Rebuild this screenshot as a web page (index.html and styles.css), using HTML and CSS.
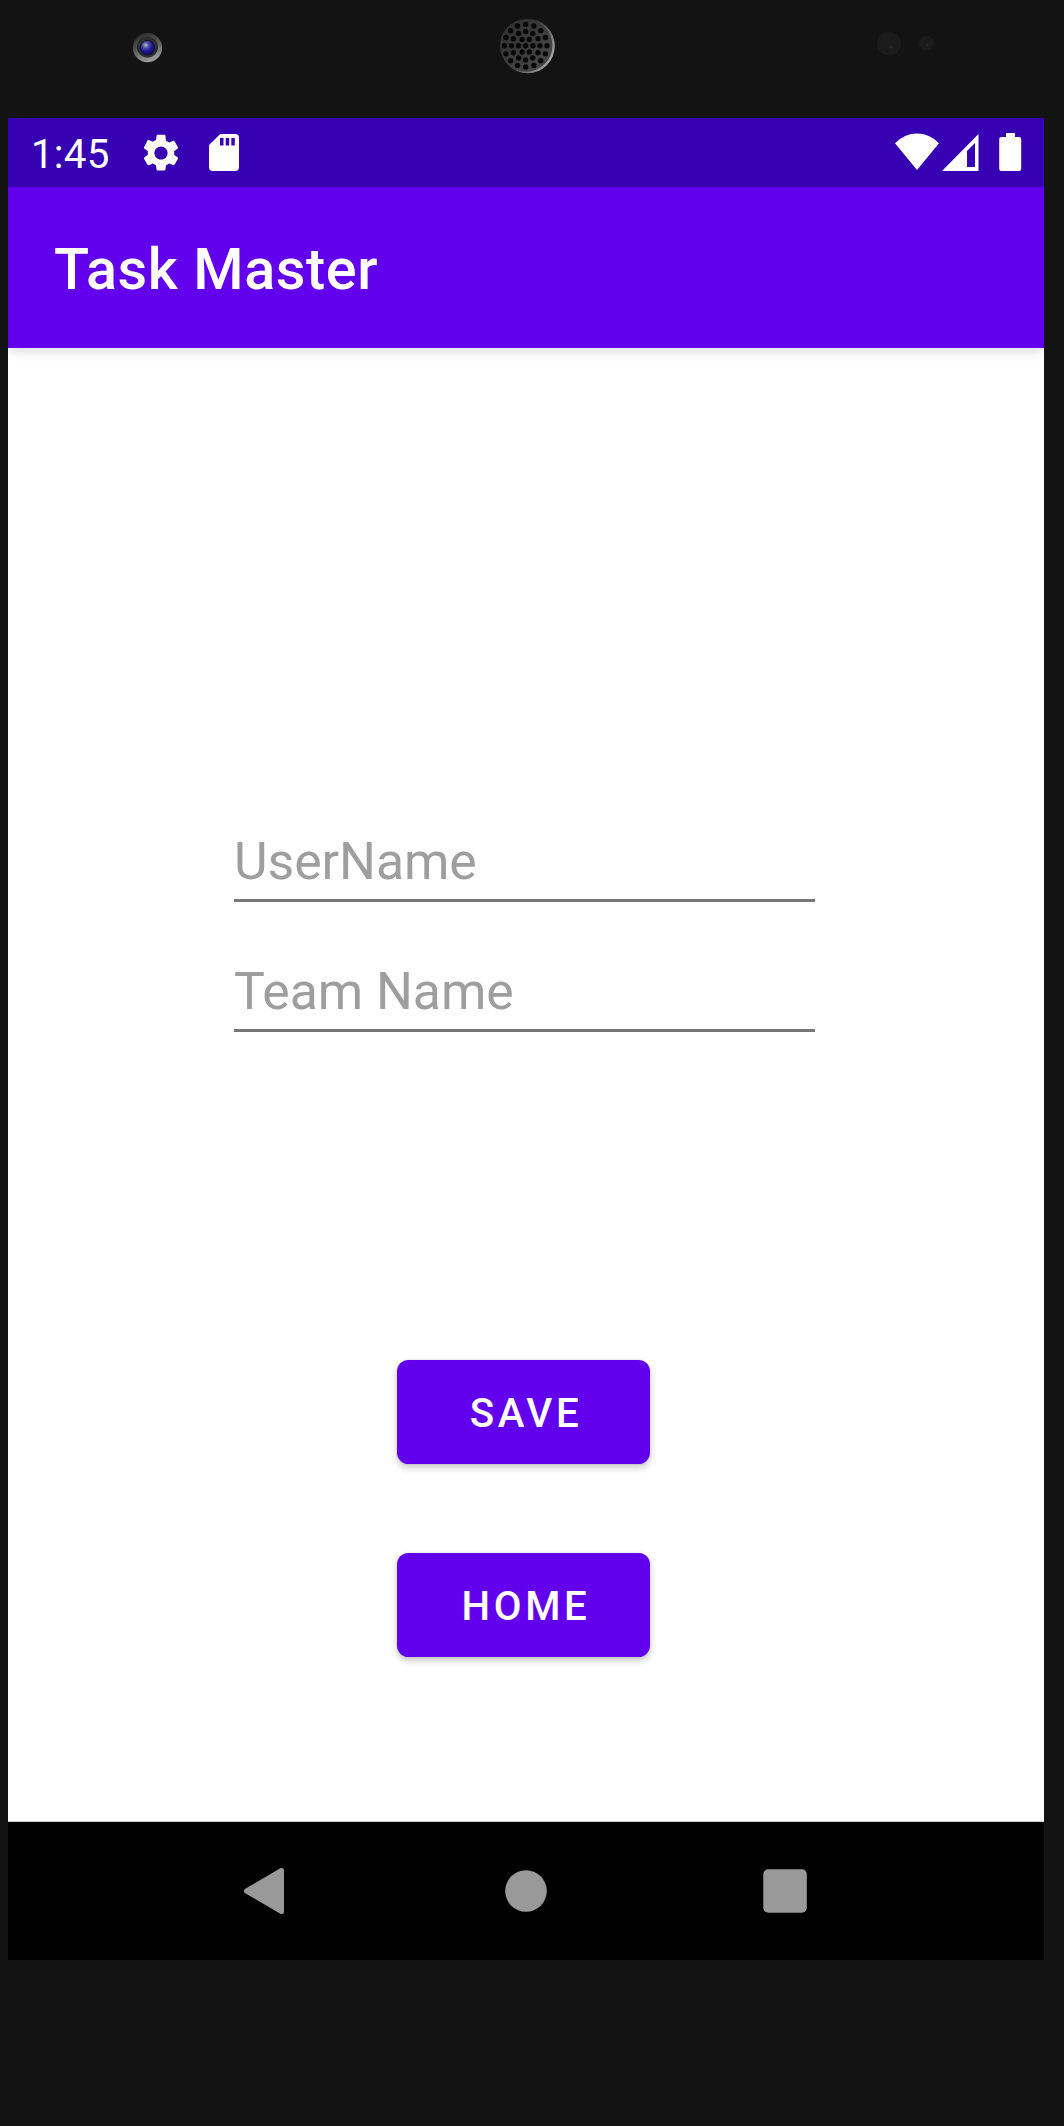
FILE: index.html
```html
<!DOCTYPE html>
<html lang="en">
<head>
<meta charset="utf-8">
<title>Task Master</title>
<link rel="stylesheet" href="styles.css">
</head>
<body>
<div class="device">
  <div class="bezel">
    <svg width="1064" height="118" viewBox="0 0 1064 118" aria-hidden="true">
      <defs>
        <linearGradient id="rim" x1="0" y1="0" x2=".4" y2="1"><stop offset="0" stop-color="#252525"/><stop offset=".5" stop-color="#505050"/><stop offset="1" stop-color="#999"/></linearGradient>
        <radialGradient id="lens" cx=".38" cy=".32" r=".7"><stop offset="0" stop-color="#b4bcd0"/><stop offset=".3" stop-color="#50509a"/><stop offset=".65" stop-color="#1c149c"/><stop offset="1" stop-color="#100a50"/></radialGradient>
        <linearGradient id="grille" x1="0" y1="0" x2="1" y2="1"><stop offset="0" stop-color="#2c2c2c"/><stop offset="1" stop-color="#4c4c4c"/></linearGradient>
        <linearGradient id="edge" x1="0" y1="0" x2="1" y2=".6"><stop offset=".4" stop-color="#222"/><stop offset="1" stop-color="#a0a0a0"/></linearGradient>
      </defs>
      <circle cx="147.5" cy="47.7" r="14.6" fill="url(#rim)"/>
      <circle cx="147.5" cy="47.2" r="10" fill="#303030" stroke="#262626"/>
      <circle cx="147.5" cy="47.7" r="7.3" fill="url(#lens)" stroke="#141420"/>
      <circle cx="527.5" cy="46" r="27.3" fill="url(#edge)"/>
      <circle cx="526.2" cy="45.5" r="26.3" fill="url(#grille)"/>
      <g fill="none" stroke="#080808" stroke-width="5.4" stroke-linecap="round" stroke-dasharray="0 1">
        <circle cx="525.7" cy="45.7" r="2.7" fill="#080808" stroke="none"/>
        <circle cx="525.7" cy="45.7" r="7.2" pathLength="6"/>
        <circle cx="525.7" cy="45.7" r="14.2" pathLength="12"/>
        <circle cx="525.7" cy="45.7" r="21.3" pathLength="16"/>
      </g>
      <circle cx="889" cy="43.500" r="12" fill="#1b1b1b"/><circle cx="891.3" cy="47" r="1.6" fill="#2e2422"/>
      <circle cx="926.5" cy="43" r="7.5" fill="#1c1b1b"/><circle cx="927" cy="45" r="1.5" fill="#2c2222"/>
    </svg>
  </div>
  <main class="screen">
    <header class="status-bar">
      <div class="status-left">
        <span class="clock">1:45</span>
        <svg class="gear" width="44" height="44" viewBox="0 0 24 24" fill="#fff"><path d="M19.14 12.94c.04-.3.06-.61.06-.94 0-.32-.02-.64-.07-.94l2.03-1.58c.18-.14.23-.41.12-.61l-1.92-3.32c-.12-.22-.37-.29-.59-.22l-2.39.96c-.5-.38-1.03-.7-1.62-.94L14.400 2.410c-.04-.24-.24-.41-.48-.41h-3.84c-.24 0-.43.17-.47.41l-.36 2.540c-.59.24-1.13.57-1.62.94l-2.39-.96c-.22-.08-.47 0-.59.22L2.740 8.870c-.12.21-.08.47.12.61l2.030 1.580c-.05.3-.09.63-.09.94s.02.64.07.94l-2.030 1.580c-.18.14-.23.41-.12.61l1.920 3.320c.12.22.37.29.59.22l2.390-.96c.5.38 1.030.7 1.620.94l.36 2.540c.05.24.24.41.48.41h3.840c.24 0 .44-.17.47-.41l.36-2.540c.59-.24 1.130-.56 1.620-.94l2.390.96c.22.08.47 0 .59-.22l1.920-3.320c.12-.22.07-.47-.12-.61l-2.010-1.580zM12 15.600c-1.980 0-3.600-1.620-3.600-3.600s1.620-3.600 3.600-3.600 3.600 1.620 3.600 3.600-1.620 3.600-3.600 3.600z"/></svg>
        <svg class="sd" width="30" height="37" viewBox="0 0 30 37"><path fill="#fff" d="M11.3 0H26.3Q30 0 30 3.7V33.3Q30 37 26.3 37H3.7Q0 37 0 33.3V11z"/><path fill="#3700b3" d="M11 4h3.5v7.5H11zM16.7 4h3.5v7.5h-3.5zM22.3 4h3.5v7.5h-3.5z"/></svg>
      </div>
      <svg class="status-right" width="128" height="38" viewBox="0 0 128 38" fill="#fff">
        <path d="M0 10.2Q9.5.5 22 .5T44 10.2L22 37z"/>
        <path fill-rule="evenodd" d="M47 38L83.5 1v37zM72 34h8V10l-8 8z"/>
        <path d="M111 0h9v4h4q2.2 0 2.2 2.2v29.6q0 2.2-2.2 2.2h-17.6q-2.2 0-2.2-2.2V6.2q0-2.2 2.2-2.2H111z"/>
      </svg>
    </header>
    <div class="app-bar"><h1>Task Master</h1></div>
    <form class="content">
      <input class="field" type="text" placeholder="UserName">
      <input class="field" type="text" placeholder="Team Name">
      <button class="button save" type="button">SAVE</button>
      <button class="button" type="button">HOME</button>
    </form>
    <nav class="nav-bar">
      <svg width="600" height="138" viewBox="0 0 600 138" fill="#999">
        <path stroke="#999" stroke-width="5" stroke-linejoin="round" d="M38.5 69L73.5 48.500V89.500z"/>
        <circle cx="318" cy="69" r="20.8"/>
        <rect x="555.3" y="47.2" width="43.5" height="43.5" rx="5"/>
      </svg>
    </nav>
  </main>
</div>
</body>
</html>
```
FILE: styles.css
```css
* { box-sizing: border-box; }

body {
  margin: 0;
  background: #131313;
  font-family: Roboto, sans-serif;
}

.device {
  width: 1064px;
  height: 2126px;
  overflow: hidden;
}

.bezel, .bezel svg { display: block; height: 118px; }

.screen {
  display: flex;
  flex-direction: column;
  width: 1036px;
  height: 1842px;
  margin-left: 8px;
  background: #fff;
}

.status-bar {
  display: flex;
  justify-content: space-between;
  align-items: center;
  height: 69px;
  padding: 0 21px 0 23px;
  background: #3700b3;
}

.status-left { display: flex; align-items: center; }

.clock {
  width: 85px;
  padding-top: 5px;
  color: #fff;
  font-size: 40.3px;
  line-height: 48px;
  letter-spacing: .2px;
}

.gear { margin-left: 22.5px; }
.sd { margin-left: 26.5px; }
.status-right { margin-bottom: 1px; }

.app-bar {
  display: flex;
  align-items: center;
  height: 161px;
  flex: none;
  padding: 4px 46px 0;
  background: #6200ee;
  box-shadow: 0 2px 12px rgba(0, 0, 0, .17);
  clip-path: inset(0 0 -20px 0);
}

h1 {
  margin: 0;
  color: #fff;
  font-size: 57.55px;
  font-weight: 500;
  letter-spacing: .6px;
}

.content {
  display: flex;
  flex-direction: column;
  align-items: center;
  height: 1474px;
  padding: 472px 0 0;
  border-bottom: 1px solid #ccc;
}

.field {
  width: 581px;
  height: 82px;
  margin: 0 3px 48px 0;
  padding: 4px 0 0;
  border: 0;
  border-bottom: 3px solid #777;
  outline: 0;
  background: none;
  font-family: inherit;
  font-size: 51.8px;
  letter-spacing: -.08px;
}

.field::placeholder { color: #9e9e9e; opacity: 1; }

.button {
  width: 253px;
  height: 104px;
  margin-right: 5px;
  padding: 3px 0 0 5px;
  border: 0;
  border-radius: 11.5px;
  background: #6200ee;
  box-shadow: 0 4px 7px rgba(0, 0, 0, .2), 0 0 3px rgba(0, 0, 0, .12);
  color: #fff;
  font-family: inherit;
  font-size: 40.3px;
  font-weight: 500;
  letter-spacing: 3.6px;
}

.save { margin-top: 280px; margin-bottom: 89px; }

.nav-bar {
  display: flex;
  justify-content: flex-start;
  height: 138px;
  padding-left: 200px;
  background: #000;
}
```
